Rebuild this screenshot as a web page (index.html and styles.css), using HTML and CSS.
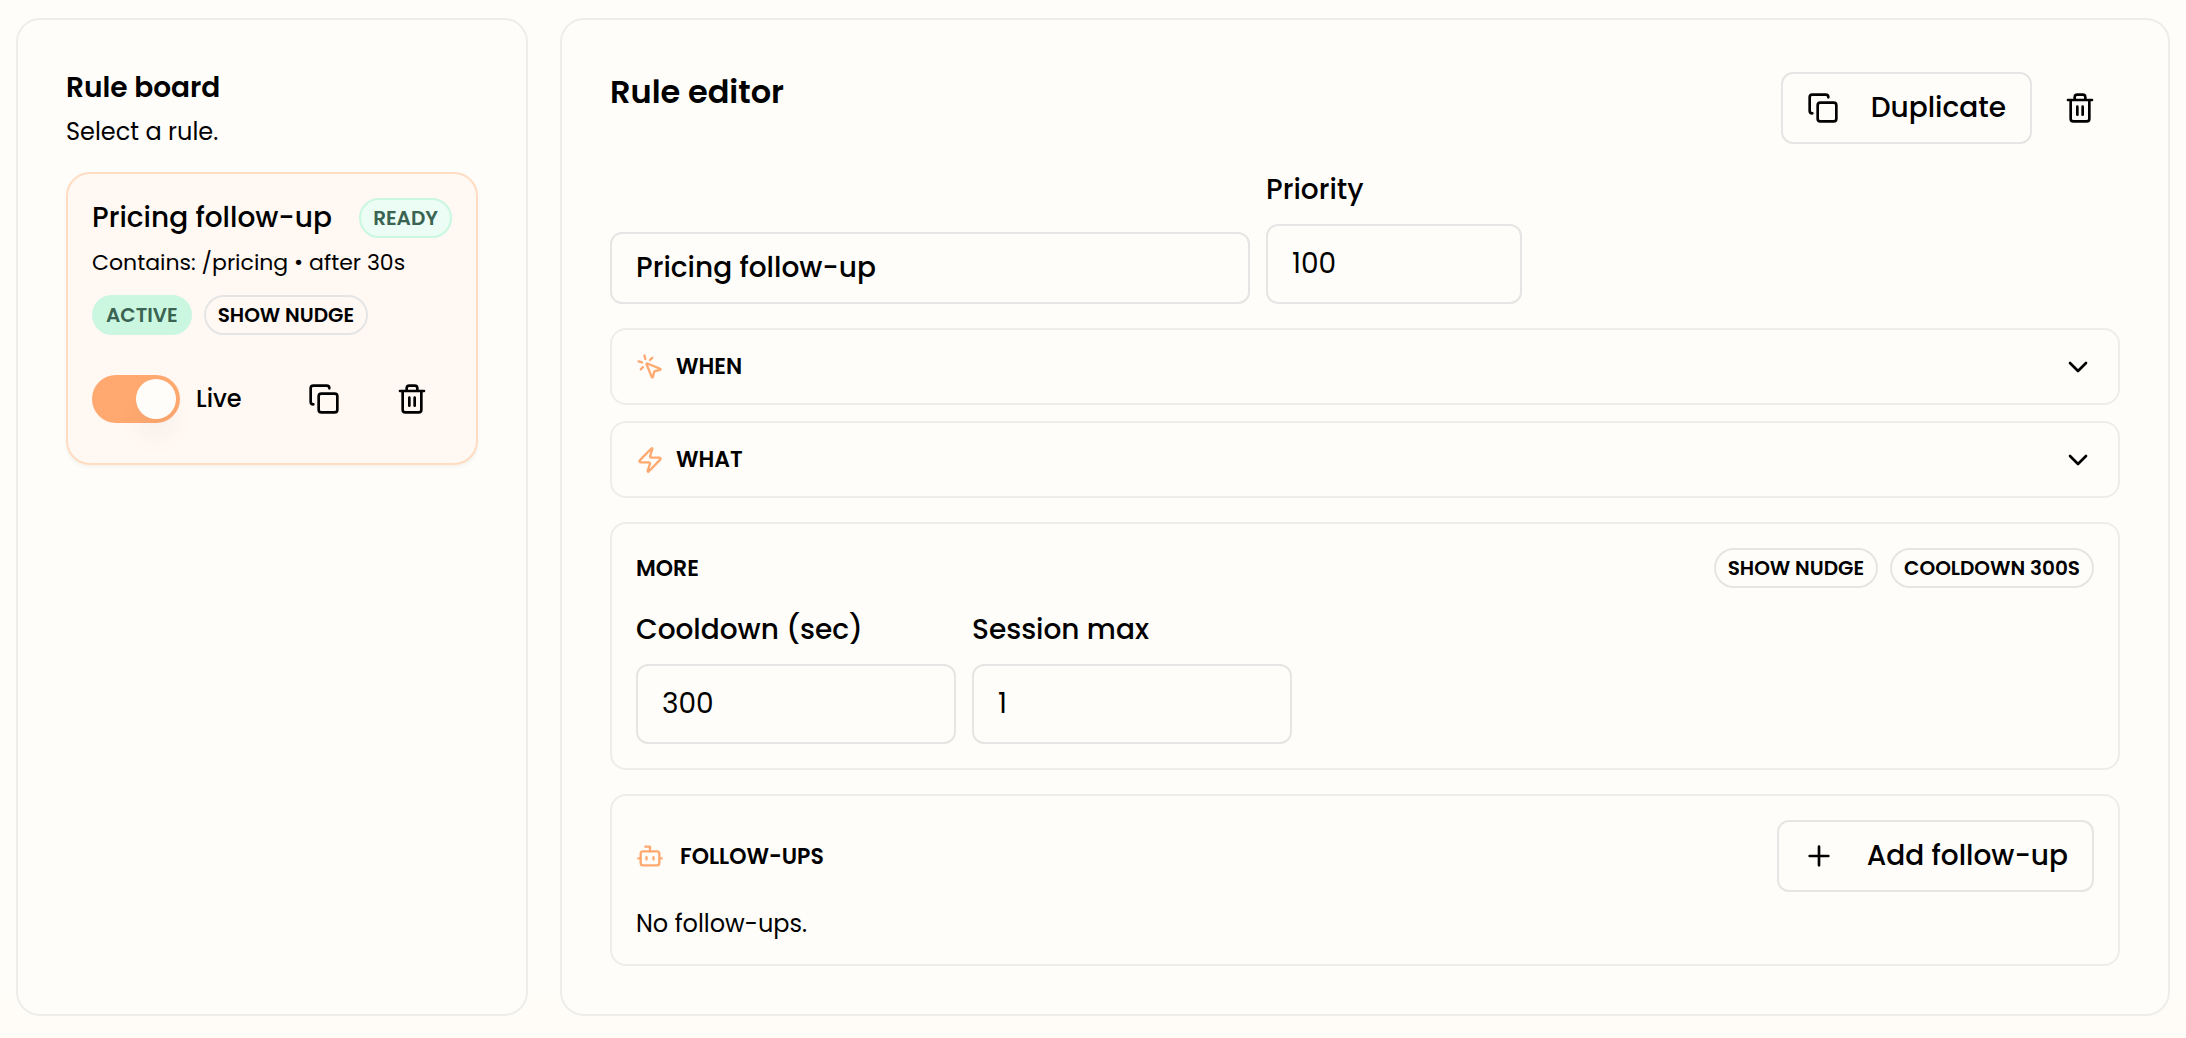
FILE: index.html
```html
<!DOCTYPE html>
<html lang="en">
<head>
  <meta charset="UTF-8">
  <title>Rule editor</title>
  <meta name="viewport" content="width=device-width, initial-scale=1.0">
  <link rel="stylesheet" href="styles.css">
</head>
<body>
  <!-- shared icons -->
  <svg class="sprite" aria-hidden="true">
    <symbol id="i-copy" viewBox="0 0 24 24">
      <rect x="8" y="8" width="14" height="14" rx="2"/>
      <path d="M4 16c-1.1 0-2-.9-2-2V4c0-1.1.9-2 2-2h10c1.1 0 2 .9 2 2"/>
    </symbol>
    <symbol id="i-trash" viewBox="0 0 24 24">
      <path d="M3 6h18M19 6v14a2 2 0 0 1-2 2H7a2 2 0 0 1-2-2V6M8 6V4a2 2 0 0 1 2-2h4a2 2 0 0 1 2 2v2M10 11v6M14 11v6"/>
    </symbol>
    <symbol id="i-chevron" viewBox="0 0 24 24">
      <path d="m6 9 6 6 6-6"/>
    </symbol>
  </svg>

  <main class="layout">
    <aside class="panel board">
      <h2 class="board-title">Rule board</h2>
      <p class="board-sub">Select a rule.</p>

      <article class="rule-card">
        <div class="rule-head">
          <h3>Pricing follow-up</h3>
          <span class="badge ready">READY</span>
        </div>
        <p class="rule-desc">Contains: /pricing • after 30s</p>
        <div class="badges">
          <span class="badge active">ACTIVE</span>
          <span class="badge">SHOW NUDGE</span>
        </div>
        <div class="rule-actions">
          <label class="live">
            <input type="checkbox" role="switch" class="switch" checked>
            Live
          </label>
          <div class="btn-group">
            <button class="icon-btn" aria-label="Duplicate rule"><svg class="icon"><use href="#i-copy"/></svg></button>
            <button class="icon-btn" aria-label="Delete rule"><svg class="icon"><use href="#i-trash"/></svg></button>
          </div>
        </div>
      </article>
    </aside>

    <section class="panel editor">
      <header class="editor-head">
        <h1>Rule editor</h1>
        <div class="btn-group">
          <button class="btn"><svg class="icon"><use href="#i-copy"/></svg>Duplicate</button>
          <button class="icon-btn" aria-label="Delete rule"><svg class="icon"><use href="#i-trash"/></svg></button>
        </div>
      </header>

      <div class="fields">
        <input class="input name" type="text" value="Pricing follow-up" aria-label="Rule name">
        <div class="field small">
          <label for="priority">Priority</label>
          <input class="input" type="number" id="priority" value="100">
        </div>
      </div>

      <div class="sections">
        <button class="box section-btn" aria-expanded="false">
          <svg class="icon accent" viewBox="0 0 24 24">
            <path d="M14 4.1 12 6M5.1 8l-2.9-.8M6 12l-1.9 2M7.2 2.2 8 5.1M9.037 9.69a.498.498 0 0 1 .653-.653l11 4.5a.5.5 0 0 1-.074.949l-4.349 1.041a1 1 0 0 0-.74.739l-1.04 4.35a.5.5 0 0 1-.95.074z"/>
          </svg>
          <span>WHEN</span>
          <svg class="icon"><use href="#i-chevron"/></svg>
        </button>
        <button class="box section-btn" aria-expanded="false">
          <svg class="icon accent" viewBox="0 0 24 24">
            <path d="M4 14a1 1 0 0 1-.78-1.63l9.9-10.2a.5.5 0 0 1 .86.46l-1.92 6.02A1 1 0 0 0 13 10h7a1 1 0 0 1 .78 1.63l-9.9 10.2a.5.5 0 0 1-.86-.46l1.92-6.02A1 1 0 0 0 11 14z"/>
          </svg>
          <span>WHAT</span>
          <svg class="icon"><use href="#i-chevron"/></svg>
        </button>
      </div>

      <div class="box more">
        <div class="box-head">
          <h2>MORE</h2>
          <div class="badges">
            <span class="badge">SHOW NUDGE</span>
            <span class="badge">COOLDOWN 300S</span>
          </div>
        </div>
        <div class="fields">
          <div class="field">
            <label for="cooldown">Cooldown (sec)</label>
            <input class="input" type="number" id="cooldown" value="300">
          </div>
          <div class="field">
            <label for="sessionMax">Session max</label>
            <input class="input" type="number" id="sessionMax" value="1">
          </div>
        </div>
      </div>

      <div class="box follow">
        <div class="box-head">
          <h2>
            <svg class="icon accent" viewBox="0 0 24 24">
              <path d="M12 8V4H8M2 14h2M20 14h2M15 13v2M9 13v2"/>
              <rect x="4" y="8" width="16" height="12" rx="2"/>
            </svg>
            FOLLOW-UPS
          </h2>
          <button class="btn"><svg class="icon" viewBox="0 0 24 24"><path d="M5 12h14M12 5v14"/></svg>Add follow-up</button>
        </div>
        <p class="empty">No follow-ups.</p>
      </div>
    </section>
  </main>
</body>
</html>
```

FILE: styles.css
```css
:root {
  --bg: #fffdf9;
  --text: #000;
  --line: #ededeb;
  --line-strong: #e5e5e5;
  --accent: #ffa970;
}

* {
  box-sizing: border-box;
}

body {
  margin: 0;
  padding: 18px 16px 22px;
  min-height: 100vh;
  background: linear-gradient(var(--bg) 95%, #fffcf8);
  color: var(--text);
  font-family: Poppins, Inter, sans-serif;
  font-size: 28px;
  line-height: 36px;
}

h1,
h2,
h3,
p {
  margin: 0;
}

button,
input {
  font: inherit;
  color: inherit;
}

button {
  cursor: pointer;
}

.sprite {
  position: absolute;
  width: 0;
  height: 0;
}

.icon {
  width: 32px;
  height: 32px;
  flex: none;
  fill: none;
  stroke: currentColor;
  stroke-width: 2;
  stroke-linecap: round;
  stroke-linejoin: round;
}

.icon.accent {
  width: 28px;
  height: 28px;
  color: var(--accent);
}

.layout {
  display: grid;
  grid-template-columns: 512px 1fr;
  gap: 32px;
}

.panel {
  padding: 48px;
  background: var(--bg);
  border: 2px solid var(--line);
  border-radius: 24px;
}

/* left board */
.board-title {
  font-size: 28px;
  font-weight: 600;
  line-height: 40px;
}

.board-sub {
  margin: 8px 0 24px;
  font-size: 24px;
  line-height: 32px;
}

.rule-card {
  padding: 24px;
  background: #fff8f3;
  border: 2px solid #ffdcc2;
  border-radius: 24px;
  box-shadow: 0 2px 4px rgba(0, 0, 0, .05);
}

.rule-head {
  display: flex;
  align-items: center;
  justify-content: space-between;
}

.rule-head h3 {
  font-size: 28px;
  font-weight: 500;
}

.rule-desc {
  margin: 8px 0 16px;
  font-size: 22px;
  line-height: 33px;
}

.badges {
  display: flex;
  gap: 12px;
}

.badge {
  padding: 0 12px;
  border: 2px solid var(--line-strong);
  border-radius: 20px;
  font-size: 20px;
  font-weight: 600;
  line-height: 36px;
  white-space: nowrap;
}

.badge.ready {
  background: #ecfdf5;
  border-color: #c9f7e0;
  color: #3b6352;
}

.badge.active {
  background: #cbf7e1;
  border-color: #cbf7e1;
  color: #3b6352;
}

.rule-actions {
  display: flex;
  align-items: center;
  justify-content: space-between;
  margin-top: 24px;
}

.live {
  display: flex;
  align-items: center;
  gap: 16px;
  font-size: 24px;
  font-weight: 500;
}

.switch {
  appearance: none;
  display: flex;
  width: 88px;
  height: 48px;
  margin: 0;
  padding: 4px;
  background: #d9d9d9;
  border-radius: 24px;
  cursor: pointer;
}

.switch::before {
  content: "";
  width: 40px;
  height: 40px;
  background: var(--bg);
  border-radius: 50%;
  box-shadow: 0 20px 30px -6px rgba(0, 0, 0, .08);
}

.switch:checked {
  justify-content: flex-end;
  background: var(--accent);
}

.btn-group {
  display: flex;
  align-items: center;
  gap: 8px;
}

.icon-btn {
  display: flex;
  align-items: center;
  justify-content: center;
  width: 80px;
  height: 80px;
  padding: 0;
  background: none;
  border: none;
  border-radius: 16px;
}

.btn {
  display: flex;
  align-items: center;
  gap: 32px;
  height: 72px;
  padding: 0 24px;
  background: var(--bg);
  border: 2px solid var(--line-strong);
  border-radius: 12px;
  font-weight: 500;
}

/* right editor */
.editor {
  display: flex;
  flex-direction: column;
  gap: 24px;
}

.editor-head {
  display: flex;
  align-items: flex-start;
  justify-content: space-between;
}

.editor-head h1 {
  font-size: 32px;
  font-weight: 600;
  line-height: 48px;
}

.fields {
  display: flex;
  align-items: flex-end;
  gap: 16px;
}

.field {
  display: flex;
  flex-direction: column;
  gap: 16px;
  width: 320px;
}

.field.small {
  width: 256px;
}

.field label {
  font-weight: 500;
}

.input {
  width: 100%;
  height: 80px;
  padding: 0 24px;
  background: var(--bg);
  border: 2px solid var(--line-strong);
  border-radius: 12px;
  appearance: textfield;
}

.input::-webkit-inner-spin-button {
  display: none;
}

.input.name {
  width: 640px;
  height: 72px;
  font-weight: 500;
}

.sections {
  display: flex;
  flex-direction: column;
  gap: 16px;
}

.box {
  padding: 24px;
  background: var(--bg);
  border: 2px solid var(--line);
  border-radius: 16px;
}

.section-btn {
  display: flex;
  align-items: center;
  gap: 12px;
  padding: 20px 24px;
  font-size: 22px;
  font-weight: 600;
  line-height: 33px;
  text-align: left;
}

.section-btn span {
  flex: 1;
}

.box-head {
  display: flex;
  align-items: center;
  justify-content: space-between;
}

.box-head h2 {
  display: flex;
  align-items: center;
  gap: 16px;
  font-size: 22px;
  font-weight: 600;
  line-height: 33px;
}

.more .fields {
  margin-top: 24px;
}

.empty {
  margin-top: 16px;
  font-size: 24px;
  line-height: 32px;
}

@media (max-width: 1500px) {
  .layout {
    grid-template-columns: 1fr;
  }

  .fields {
    flex-wrap: wrap;
  }
}
```
